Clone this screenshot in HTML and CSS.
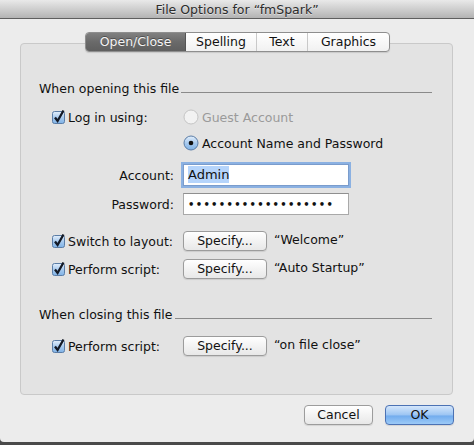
FILE: index.html
```html
<!DOCTYPE html>
<html>
<head>
    <title>File Options</title>
    <link rel="stylesheet" href="styles.css">
</head>
<body>
    <div id="window">
        <div class="titlebar">File Options for “fmSpark”</div>
        <div class="content">
            <div class="tabs">
                <span class="tab selected">Open/Close</span>
                <span class="tab">Spelling</span>
                <span class="tab">Text</span>
                <span class="tab last">Graphics</span>
            </div>
            <div class="box">
                <div class="heading"><span>When opening this file</span><i></i></div>

                <div class="row r-login">
                    <label class="check">
                        <svg width="15" height="15" viewBox="0 0 15 15"><defs><linearGradient id="cb" x1="0" y1="0" x2="0" y2="1"><stop offset="0" stop-color="#e4effb"/><stop offset="0.5" stop-color="#a9cbef"/><stop offset="1" stop-color="#7fb2e6"/></linearGradient></defs><rect x="1.5" y="2.5" width="12" height="12" rx="2" fill="url(#cb)" stroke="#5b7da6"/><path d="M4 8.5 L6.6 12 L12.5 1.5" fill="none" stroke="#141a26" stroke-width="2.3"/></svg>
                        Log in using:
                    </label>
                    <span class="radio disabled"><svg width="16" height="16" viewBox="0 0 16 16"><circle cx="8" cy="8" r="7" fill="#f2f2f2" stroke="#c4c4c4"/></svg>Guest Account</span>
                </div>
                <div class="row r-radio">
                    <span class="radio"><svg width="16" height="16" viewBox="0 0 16 16"><defs><linearGradient id="rb" x1="0" y1="0" x2="0" y2="1"><stop offset="0" stop-color="#e4effb"/><stop offset="0.5" stop-color="#a9cbef"/><stop offset="1" stop-color="#7fb2e6"/></linearGradient></defs><circle cx="8" cy="8" r="7" fill="url(#rb)" stroke="#5b7da6"/><circle cx="8" cy="8" r="2.3" fill="#111"/></svg>Account Name and Password</span>
                </div>
                <div class="row r-field r-account">
                    <span class="flabel">Account:</span>
                    <span class="field focused"><span class="sel">Admin</span></span>
                </div>
                <div class="row r-field r-password">
                    <span class="flabel">Password:</span>
                    <span class="field dots">•••••••••••••••••••</span>
                </div>

                <div class="row r-btn r-switch">
                    <label class="check">
                        <svg width="15" height="15" viewBox="0 0 15 15"><rect x="1.5" y="2.5" width="12" height="12" rx="2" fill="url(#cb)" stroke="#5b7da6"/><path d="M4 8.5 L6.6 12 L12.5 1.5" fill="none" stroke="#141a26" stroke-width="2.3"/></svg>
                        Switch to layout:
                    </label>
                    <span class="button">Specify...</span>
                    <span class="value">“Welcome”</span>
                </div>
                <div class="row r-btn r-perform">
                    <label class="check">
                        <svg width="15" height="15" viewBox="0 0 15 15"><rect x="1.5" y="2.5" width="12" height="12" rx="2" fill="url(#cb)" stroke="#5b7da6"/><path d="M4 8.5 L6.6 12 L12.5 1.5" fill="none" stroke="#141a26" stroke-width="2.3"/></svg>
                        Perform script:
                    </label>
                    <span class="button">Specify...</span>
                    <span class="value">“Auto Startup”</span>
                </div>

                <div class="heading h-close"><span>When closing this file</span><i></i></div>

                <div class="row r-btn r-close">
                    <label class="check">
                        <svg width="15" height="15" viewBox="0 0 15 15"><rect x="1.5" y="2.5" width="12" height="12" rx="2" fill="url(#cb)" stroke="#5b7da6"/><path d="M4 8.5 L6.6 12 L12.5 1.5" fill="none" stroke="#141a26" stroke-width="2.3"/></svg>
                        Perform script:
                    </label>
                    <span class="button">Specify...</span>
                    <span class="value">“on file close”</span>
                </div>
            </div>
            <div class="footer">
                <span class="button push">Cancel</span>
                <span class="button push default">OK</span>
            </div>
        </div>
    </div>
</body>
</html>
```

FILE: styles.css
```css
body {
    margin: 0;
    background: #4a4a4a;
    font-family: "DejaVu Sans", "Liberation Sans", sans-serif;
    font-size: 12.5px;
    color: #111;
}
#window {
    width: 474px;
    height: 442px;
    background: #ececec;
    border-radius: 0 0 4px 4px;
    overflow: hidden;
}
.titlebar {
    height: 18px;
    line-height: 19px;
    text-align: center;
    color: #2c2c2c;
    text-shadow: 0 1px 0 rgba(255,255,255,0.5);
    background: linear-gradient(#e9e9e9, #c9c9c9 60%, #b3b3b3);
    border-bottom: 1px solid #5e5e5e;
}
.content {
    padding: 13px 0 0 20px;
}
.tabs {
    position: relative;
    z-index: 1;
    display: flex;
    width: 303px;
    height: 18px;
    margin: 0 0 -9px 65px;
    border: 1px solid #8e8e8e;
    border-radius: 4px;
    background: linear-gradient(#ffffff, #f1f1f1);
    box-shadow: 0 1px 1px rgba(0,0,0,0.12);
    overflow: hidden;
}
.tab {
    line-height: 18px;
    text-align: center;
    border-right: 1px solid #c9c9c9;
}
.tab:nth-child(1) { width: 99px; }
.tab:nth-child(2) { width: 70px; }
.tab:nth-child(3) { width: 50px; }
.tab:nth-child(4) { flex: 1; }
.tab.last { border-right: none; }
.tab.selected {
    color: #f4f4f4;
    text-shadow: 0 -1px 0 rgba(0,0,0,0.35);
    background: linear-gradient(#808080, #6a6a6a 50%, #5f5f5f);
    border-right: 1px solid #555;
}
.box {
    width: 431px;
    height: 314px;
    padding-top: 36px;
    background: #e3e3e3;
    border: 1px solid #c9c9c9;
    border-radius: 4px;
}
.heading {
    display: flex;
    align-items: flex-end;
    height: 16px;
    padding-left: 18px;
    width: 393px;
}
.heading i {
    flex: 1;
    height: 1px;
    margin: 0 0 3px 2px;
    background: #8a8a8a;
}
.row {
    display: flex;
    align-items: center;
    padding-left: 30px;
}
.check {
    display: flex;
    align-items: center;
    gap: 2px;
}
.check svg {
    margin-top: -2px;
}
.r-login {
    height: 18px;
    margin-top: 12px;
}
.r-login .check {
    width: 132px;
}
.radio {
    display: flex;
    align-items: center;
    gap: 3px;
}
.radio.disabled {
    color: #9a9a9a;
}
.r-radio {
    height: 18px;
    margin-top: 8px;
    padding-left: 162px;
}
.r-field {
    padding-left: 0;
}
.flabel {
    width: 153px;
    text-align: right;
    margin-right: 9px;
}
.field {
    box-sizing: border-box;
    height: 22px;
    width: 166px;
    background: #fff;
    border: 1px solid #a9a9a9;
    border-top-color: #8f8f8f;
    padding: 2px 0 0 4px;
    font-size: 13px;
}
.r-account {
    margin-top: 12px;
}
.field.focused {
    border-color: #7a9ccc;
    box-shadow: 0 0 0 2px rgba(110,160,225,0.75);
}
.sel {
    background: #b5d4fb;
    padding: 1px 0;
}
.r-password {
    margin-top: 7px;
}
.dots {
    font-size: 10px;
    letter-spacing: 1.3px;
    line-height: 18px;
    padding-left: 4px;
    font-weight: bold;
}
.r-btn {
    height: 20px;
}
.r-btn .check {
    width: 132px;
}
.r-switch {
    margin-top: 16px;
}
.r-perform {
    margin-top: 8px;
}
.button {
    box-sizing: border-box;
    display: inline-block;
    width: 84px;
    height: 20px;
    line-height: 18px;
    text-align: center;
    border: 1px solid #9c9c9c;
    border-radius: 4px;
    background: linear-gradient(#ffffff, #f3f3f3 50%, #e8e8e8);
    box-shadow: 0 1px 1px rgba(0,0,0,0.1);
}
.value {
    margin-left: 7px;
    margin-top: -3px;
}
.h-close {
    margin-top: 27px;
}
.r-close {
    margin-top: 14px;
}
.footer {
    display: flex;
    justify-content: flex-end;
    gap: 12px;
    width: 434px;
    margin-top: 10px;
}
.button.push {
    width: 69px;
}
.button.default {
    border-color: #4c72b4;
    background: linear-gradient(#d4e6fb, #9cc5f3 50%, #72acee 55%, #9ccaf7);
}
```
